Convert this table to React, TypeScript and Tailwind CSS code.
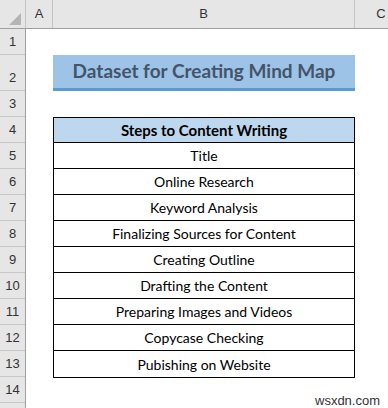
import React from "react";

const rows = [
  "Title",
  "Online Research",
  "Keyword Analysis",
  "Finalizing Sources for Content",
  "Creating Outline",
  "Drafting the Content",
  "Preparing Images and Videos",
  "Copycase Checking",
  "Pubishing on Website",
];

const rowHeights = [26, 36, 26, 26, 26, 26, 26, 26, 26, 26, 26, 26, 26, 26];

export default function App() {
  return (
    <div
      className="relative w-[388px] h-[408px] overflow-hidden bg-white"
      style={{ fontFamily: "Lato, 'Open Sans', sans-serif" }}
    >
      {/* column headers */}
      <div className="flex h-[29px] bg-[#e6e6e6] border-b border-[#a0a0a0]">
        <div className="relative w-[26px] shrink-0 border-r border-[#c4c4c4]">
          <div className="absolute right-[4px] bottom-[3px] w-0 h-0 border-l-[12px] border-l-transparent border-b-[12px] border-b-[#b4b4b4]" />
        </div>
        <div
          className="w-[27px] shrink-0 border-r border-[#c4c4c4] flex items-center justify-center text-[13px] text-[#333]"
          style={{ fontFamily: "'Liberation Sans', sans-serif" }}
        >
          A
        </div>
        <div
          className="w-[302px] shrink-0 border-r border-[#c4c4c4] flex items-center justify-center text-[13px] text-[#333]"
          style={{ fontFamily: "'Liberation Sans', sans-serif" }}
        >
          B
        </div>
        <div
          className="w-[52px] shrink-0 flex items-center justify-center text-[13px] text-[#333]"
          style={{ fontFamily: "'Liberation Sans', sans-serif" }}
        >
          C
        </div>
      </div>

      <div className="flex">
        {/* row headers */}
        <div
          className="w-[26px] shrink-0 h-[400px] bg-[#e6e6e6] border-r border-[#a0a0a0] flex flex-col"
          style={{ fontFamily: "'Liberation Sans', sans-serif" }}
        >
          {rowHeights.map((h, i) => (
            <div
              key={i}
              className="shrink-0 border-b border-[#c8c8c8] flex items-end justify-center pb-[3px] text-[13px] text-[#333]"
              style={{ height: h }}
            >
              {i + 1}
            </div>
          ))}
        </div>

        {/* cells */}
        <div className="flex-1 flex flex-col">
          <div className="h-[26px]" />
          <div className="h-[36px] flex">
            <div className="w-[27px] shrink-0" />
            <div className="w-[302px] shrink-0 bg-[#9dc3e6] border-b-[3px] border-[#5b9bd5] flex items-center justify-center text-[19px] font-bold text-[#44546a]">
              Dataset for Creating Mind Map
            </div>
          </div>
          <div className="h-[26px]" />
          <div className="flex">
            <div className="w-[27px] shrink-0" />
            <div className="w-[302px] shrink-0 border border-black flex flex-col text-[14px] text-black">
              <div className="h-[25px] bg-[#bdd7ee] border-b border-black flex items-center justify-center font-bold text-[15px]">
                Steps to Content Writing
              </div>
              {rows.map((r, i) => (
                <div
                  key={r}
                  className={`h-[26px] flex items-center justify-center ${
                    i < rows.length - 1 ? "border-b border-black" : ""
                  }`}
                >
                  {r}
                </div>
              ))}
            </div>
          </div>
        </div>
      </div>

      <div
        className="absolute left-[315px] top-[391px] text-[13px] text-[#333]"
        style={{ fontFamily: "'Liberation Sans', sans-serif" }}
      >
        wsxdn.com
      </div>
    </div>
  );
}
